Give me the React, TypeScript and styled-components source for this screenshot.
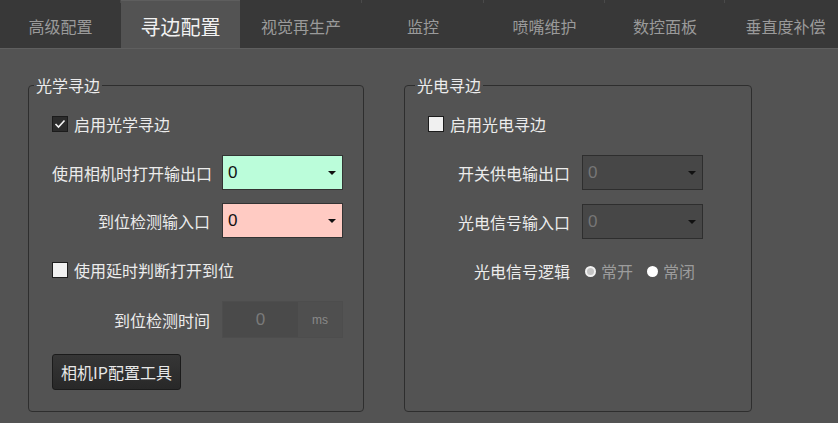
import React, { useState } from 'react';
import styled, { createGlobalStyle, css } from 'styled-components';

const GlobalStyle = createGlobalStyle`
    html, body {
        margin: 0;
        padding: 0;
        background: #535353;
    }
    body {
        font-family: "Noto Sans CJK SC", "Noto Sans", "Liberation Sans", sans-serif;
        color: #ececec;
    }
`;

const Page = styled.div`
    width: 838px;
    height: 423px;
    overflow: hidden;
    background: #535353;
`;

const TabBar = styled.div`
    display: flex;
    height: 48px;
    background: #383838;
    border-bottom: 1px solid #5f5f5f;
    overflow: hidden;
`;

const Tab = styled.div<{ $active?: boolean; $width: number }>`
    box-sizing: border-box;
    flex: 0 0 ${(p) => p.$width}px;
    display: flex;
    align-items: center;
    justify-content: center;
    padding-top: 4px;
    font-size: 16px;
    color: #9a9a9a;
    position: relative;
    cursor: pointer;
    &::after {
        content: '';
        position: absolute;
        right: 0;
        top: 0;
        width: 1px;
        height: 3px;
        background: #4a4a4a;
    }
    ${(p) =>
        p.$active &&
        css`
            background: #535353;
            color: #f2f2f2;
            font-size: 20px;
            padding-top: 2px;
            border-top: 1px solid #5e5e5e;
            margin-bottom: -1px;
            &::after {
                display: none;
            }
        `}
`;

const Content = styled.div`
    display: flex;
    gap: 40px;
    padding: 27px 0 0 28px;
`;

const Group = styled.fieldset<{ $width: number }>`
    box-sizing: border-box;
    width: ${(p) => p.$width}px;
    height: 336px;
    margin: 0;
    padding: 0;
    border: 1px solid #2e2e2e;
    border-radius: 4px;
`;

const Legend = styled.legend<{ $offset: number }>`
    font-size: 16px;
    line-height: 18px;
    padding: 0 2px;
    margin-left: ${(p) => p.$offset}px;
    color: #ececec;
`;

const GroupBody = styled.div`
    padding-left: 23px;
`;

const CheckRow = styled.label<{ $top: number }>`
    display: flex;
    align-items: center;
    height: 20px;
    margin-top: ${(p) => p.$top}px;
    font-size: 16px;
    color: #ececec;
    cursor: pointer;
`;

const Box = styled.span<{ $checked?: boolean }>`
    box-sizing: border-box;
    width: 16px;
    height: 16px;
    margin-right: 6px;
    border: 1px solid #1c1c1c;
    background: ${(p) => (p.$checked ? '#2c2c2c' : '#f0f0f0')};
    display: flex;
    align-items: center;
    justify-content: center;
`;

const FieldRow = styled.div<{ $top: number; $labelWidth: number; $height?: number }>`
    display: grid;
    grid-template-columns: ${(p) => p.$labelWidth}px 121px;
    column-gap: 12px;
    align-items: center;
    height: ${(p) => p.$height ?? 35}px;
    margin-top: ${(p) => p.$top}px;
`;

const Label = styled.span`
    text-align: right;
    font-size: 16px;
    color: #ececec;
    white-space: nowrap;
`;

const Select = styled.div<{ $bg?: string; $disabled?: boolean }>`
    box-sizing: border-box;
    height: 35px;
    display: flex;
    align-items: center;
    justify-content: space-between;
    padding: 0 6px 0 5px;
    border: 1px solid ${(p) => (p.$disabled ? '#2e2e2e' : '#333333')};
    background: ${(p) => p.$bg ?? '#474747'};
    color: ${(p) => (p.$disabled ? '#767676' : '#111111')};
    font-size: 17px;
    font-family: "Liberation Sans", Arial, sans-serif;
`;

const Arrow = styled.span`
    width: 0;
    height: 0;
    border-left: 4px solid transparent;
    border-right: 4px solid transparent;
    border-top: 4px solid #111;
`;

const Spin = styled.div`
    box-sizing: border-box;
    height: 37px;
    display: flex;
    border: 1px solid #4d4d4d;
    font-family: "Liberation Sans", Arial, sans-serif;
`;

const SpinValue = styled.div`
    flex: 1;
    background: #4a4a4a;
    color: #7a7a7a;
    font-size: 17px;
    display: flex;
    align-items: center;
    justify-content: center;
`;

const SpinUnit = styled.div`
    width: 44px;
    background: #4f4f4f;
    color: #8a8a8a;
    font-size: 12px;
    display: flex;
    align-items: center;
    justify-content: center;
`;

const ToolButton = styled.button`
    box-sizing: border-box;
    margin-top: 16px;
    width: 129px;
    height: 36px;
    padding: 0;
    border: 1px solid #1b1b1b;
    border-radius: 3px;
    background: linear-gradient(#363636, #282828);
    color: #e8e8e8;
    font-family: inherit;
    font-size: 16px;
    cursor: pointer;
`;

const RadioGroup = styled.div`
    display: flex;
    align-items: center;
    gap: 14px;
    padding-left: 3px;
`;

const RadioItem = styled.label`
    display: flex;
    align-items: center;
    gap: 5px;
    font-size: 16px;
    color: #9c9c9c;
`;

const Dot = styled.span<{ $selected?: boolean }>`
    box-sizing: border-box;
    width: 11px;
    height: 11px;
    border-radius: 50%;
    background: ${(p) => (p.$selected ? '#c4c4c4' : '#ffffff')};
    border: ${(p) => (p.$selected ? '2px solid #f2f2f2' : 'none')};
`;

const tabs = ['高级配置', '寻边配置', '视觉再生产', '监控', '喷嘴维护', '数控面板', '垂直度补偿'];
const tabWidths = [121, 119, 122, 122, 121, 120, 121];

const Check = ({ checked }: { checked?: boolean }) => (
    <Box $checked={checked}>
        {checked && (
            <svg width="12" height="10" viewBox="0 0 12 10">
                <path d="M1.5 5 L4.5 8 L10.5 1.5" fill="none" stroke="#f4f4f4" strokeWidth="1.6" />
            </svg>
        )}
    </Box>
);

const App = () => {
    const [active, setActive] = useState(1);
    const [optical, setOptical] = useState(true);
    const [delay, setDelay] = useState(false);
    const [photo, setPhoto] = useState(false);

    return (
        <Page>
            <GlobalStyle />
            <TabBar>
                {tabs.map((t, i) => (
                    <Tab key={t} $width={tabWidths[i]} $active={i === active} onClick={() => setActive(i)}>
                        {t}
                    </Tab>
                ))}
            </TabBar>
            <Content>
                <Group $width={336}>
                    <Legend $offset={5}>光学寻边</Legend>
                    <GroupBody>
                        <CheckRow $top={20} onClick={() => setOptical(!optical)}>
                            <Check checked={optical} />
                            启用光学寻边
                        </CheckRow>
                        <FieldRow $top={21} $labelWidth={158}>
                            <Label>使用相机时打开输出口</Label>
                            <Select $bg="#bbfdda">
                                0
                                <Arrow />
                            </Select>
                        </FieldRow>
                        <FieldRow $top={13} $labelWidth={158}>
                            <Label>到位检测输入口</Label>
                            <Select $bg="#ffcbc3">
                                0
                                <Arrow />
                            </Select>
                        </FieldRow>
                        <CheckRow $top={22} onClick={() => setDelay(!delay)}>
                            <Check checked={delay} />
                            使用延时判断打开到位
                        </CheckRow>
                        <FieldRow $top={21} $labelWidth={158} $height={37}>
                            <Label>到位检测时间</Label>
                            <Spin>
                                <SpinValue>0</SpinValue>
                                <SpinUnit>ms</SpinUnit>
                            </Spin>
                        </FieldRow>
                        <ToolButton>相机IP配置工具</ToolButton>
                    </GroupBody>
                </Group>
                <Group $width={348}>
                    <Legend $offset={10}>光电寻边</Legend>
                    <GroupBody>
                        <CheckRow $top={20} onClick={() => setPhoto(!photo)}>
                            <Check checked={photo} />
                            启用光电寻边
                        </CheckRow>
                        <FieldRow $top={21} $labelWidth={142}>
                            <Label>开关供电输出口</Label>
                            <Select $disabled>
                                0
                                <Arrow />
                            </Select>
                        </FieldRow>
                        <FieldRow $top={14} $labelWidth={142}>
                            <Label>光电信号输入口</Label>
                            <Select $disabled>
                                0
                                <Arrow />
                            </Select>
                        </FieldRow>
                        <FieldRow $top={20} $labelWidth={142} $height={20}>
                            <Label>光电信号逻辑</Label>
                            <RadioGroup>
                                <RadioItem>
                                    <Dot $selected />
                                    常开
                                </RadioItem>
                                <RadioItem>
                                    <Dot />
                                    常闭
                                </RadioItem>
                            </RadioGroup>
                        </FieldRow>
                    </GroupBody>
                </Group>
            </Content>
        </Page>
    );
};

export default App;
